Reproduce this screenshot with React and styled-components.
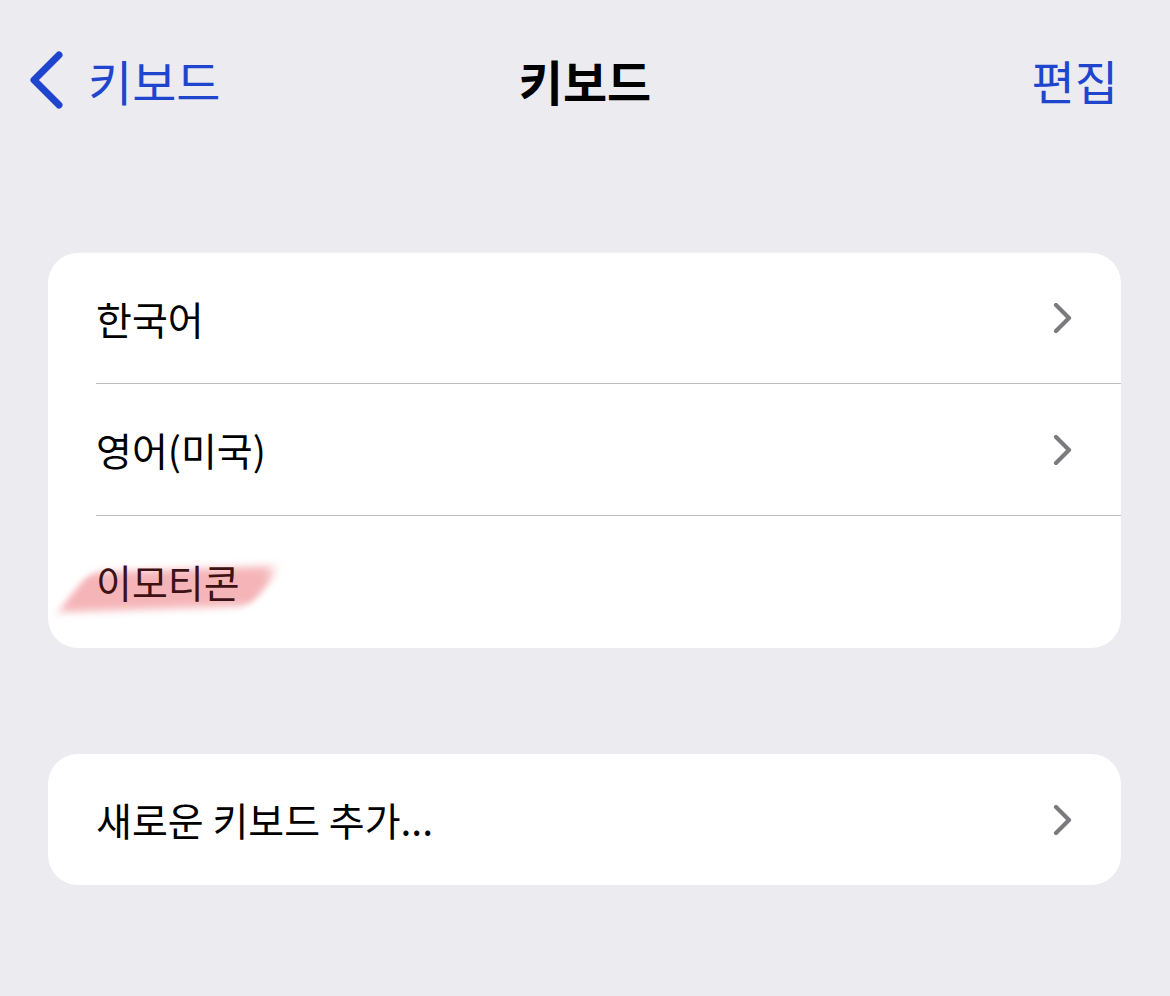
import React from "react";
import styled, { createGlobalStyle } from "styled-components";

const Global = createGlobalStyle`
  html, body { margin: 0; padding: 0; background: #EBEBF0; }
  body { font-family: "Noto Sans CJK KR", "Noto Sans", sans-serif; }
  * { box-sizing: border-box; }
`;

const Page = styled.div`
  width: 1170px;
  height: 996px;
  background: #EBEBF0;
  padding: 0 49px 0 48px;
  overflow: hidden;
`;

const NavBar = styled.div`
  height: 160px;
  margin: 0 -49px 0 -48px;
  padding: 51px 28px 0 28px;
  display: grid;
  grid-template-columns: 1fr auto 1fr;
  align-items: center;
  align-content: start;
`;

const BackButton = styled.div`
  display: flex;
  align-items: center;
  gap: 24px;
  color: #1F45CF;
  font-size: 48px;
  font-weight: 400;
  line-height: 58px;
`;

const Title = styled.div`
  font-size: 48px;
  font-weight: 700;
  color: #000;
  line-height: 58px;
`;

const EditButton = styled.div`
  justify-self: end;
  margin-right: 24px;
  color: #1F45CF;
  font-size: 47px;
  line-height: 58px;
`;

const Content = styled.div`
  padding-top: 93px;
  display: flex;
  flex-direction: column;
  gap: 106px;
`;

const Card = styled.div`
  background: #fff;
  border-radius: 30px;
  overflow: hidden;
`;

const Row = styled.div`
  height: ${(p) => p.h || 132}px;
  margin-left: 48px;
  padding-right: 48px;
  display: flex;
  align-items: center;
  justify-content: space-between;
  border-bottom: ${(p) => (p.last ? "none" : "1px solid #BDBDC2")};
  position: relative;
`;

const Label = styled.span`
  font-size: 39px;
  color: ${(p) => p.color || "#000"};
  position: relative;
  z-index: 1;
  line-height: 1;
  margin-top: ${(p) => p.mt || 0}px;
`;

const Highlight = styled.div`
  position: absolute;
  left: -20px;
  top: 53px;
  width: 188px;
  height: 40px;
  background: #F4ADB1;
  transform: skewX(-40deg) rotate(-2deg);
  filter: blur(4px);
  border-radius: 8px 20px 8px 8px;
  opacity: 0.9;
`;

const Chevron = () => (
  <svg width="20" height="30" viewBox="0 0 20 30">
    <path d="M3 2 L16 15 L3 28" fill="none" stroke="#7A7A7F" strokeWidth="4.2" strokeLinecap="round" strokeLinejoin="round" />
  </svg>
);

const BackChevron = () => (
  <svg width="36" height="58" viewBox="0 0 36 58">
    <path d="M31 4 L6 29 L31 54" fill="none" stroke="#1F45CF" strokeWidth="7" strokeLinecap="round" strokeLinejoin="round" />
  </svg>
);

export default function App() {
  return (
    <>
      <Global />
      <Page>
        <NavBar>
          <BackButton>
            <BackChevron />
            <span>키보드</span>
          </BackButton>
          <Title>키보드</Title>
          <EditButton>편집</EditButton>
        </NavBar>
        <Content>
          <Card>
            <Row h={131}>
              <Label>한국어</Label>
              <Chevron />
            </Row>
            <Row h={132}>
              <Label>영어(미국)</Label>
              <Chevron />
            </Row>
            <Row h={132} last>
              <Highlight />
              <Label color="#3E1214" mt={-2}>이모티콘</Label>
            </Row>
          </Card>
          <Card>
            <Row h={131} last>
              <Label>새로운 키보드 추가...</Label>
              <Chevron />
            </Row>
          </Card>
        </Content>
      </Page>
    </>
  );
}
